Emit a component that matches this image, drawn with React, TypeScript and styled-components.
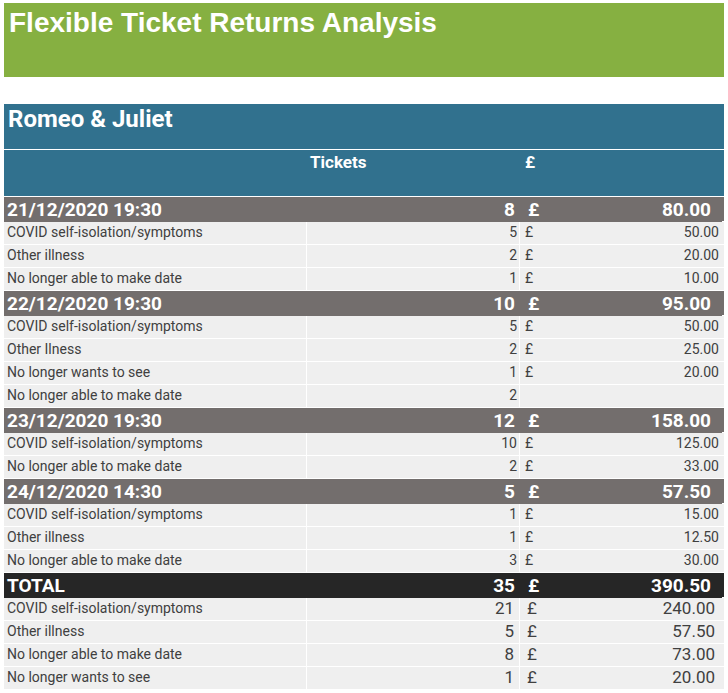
import React from "react";
import styled, { createGlobalStyle } from "styled-components";

const Global = createGlobalStyle`
  html, body { margin: 0; padding: 0; background: #ffffff; }
  body { font-family: Roboto, "Liberation Sans", sans-serif; }
`;

const Page = styled.div`
  padding: 3px 4px 0 4px;
  width: 720px;
`;

const TitleBand = styled.div`
  background: #86b041;
  height: 74px;
  box-sizing: border-box;
  padding: 4px 0 0 5px;
  font-family: "Liberation Sans", Arial, sans-serif;
  font-weight: 700;
  font-size: 28px;
  color: #ffffff;
`;

const Table = styled.div`
  margin-top: 27px;
  display: flex;
  flex-direction: column;
  background: #ffffff;
`;

const ShowBand = styled.div`
  background: #31718e;
  height: 46px;
  box-sizing: border-box;
  padding: 1px 0 0 4px;
  font-weight: 700;
  font-size: 24px;
  color: #ffffff;
  border-bottom: 1px solid #ffffff;
`;

const Grid = styled.div<{ $h: number; $bg: string; $gap?: boolean }>`
  display: grid;
  grid-template-columns: 302px 212px 204px;
  column-gap: ${(p) => (p.$gap ? "1px" : "0")};
  height: ${(p) => p.$h}px;
  background: ${(p) => (p.$gap ? "#ffffff" : p.$bg)};
  margin-bottom: 1px;
  & > div {
    background: ${(p) => p.$bg};
  }
`;

const HeadCell = styled.div<{ $pl?: number }>`
  font-weight: 700;
  font-size: 17px;
  color: #ffffff;
  padding: 2px 0 0 ${(p) => p.$pl ?? 0}px;
  line-height: 20px;
`;

const GroupLabel = styled.div`
  font-weight: 700;
  font-size: 19px;
  line-height: 24px;
  padding-top: 1px;
  color: #ffffff;
  padding-left: 3px;
  white-space: nowrap;
`;

const GroupNum = styled.div`
  font-weight: 700;
  font-size: 19px;
  line-height: 24px;
  padding-top: 1px;
  color: #ffffff;
  text-align: right;
  padding-right: 3px;
`;

const Money = styled.div<{ $size: number; $weight: number; $color: string; $lp: number; $rp: number }>`
  display: flex;
  justify-content: space-between;
  font-size: ${(p) => p.$size}px;
  font-weight: ${(p) => p.$weight};
  color: ${(p) => p.$color};
  line-height: ${(p) => (p.$weight === 700 ? 24 : 18)}px;
  padding: 1px ${(p) => p.$rp}px 0 ${(p) => p.$lp}px;
`;

const Label = styled.div`
  font-size: 14px;
  line-height: 18px;
  color: #404040;
  padding: 1px 0 0 3px;
  white-space: nowrap;
`;

const Num = styled.div<{ $size: number; $rp: number }>`
  font-size: ${(p) => p.$size}px;
  line-height: 18px;
  color: #404040;
  text-align: right;
  padding: 1px ${(p) => p.$rp}px 0 0;
`;

type Row = [string, number, string | null];
type Group = { label: string; tickets: number; total: string; rows: Row[] };

const groups: Group[] = [
  {
    label: "21/12/2020 19:30",
    tickets: 8,
    total: "80.00",
    rows: [
      ["COVID self-isolation/symptoms", 5, "50.00"],
      ["Other illness", 2, "20.00"],
      ["No longer able to make date", 1, "10.00"],
    ],
  },
  {
    label: "22/12/2020 19:30",
    tickets: 10,
    total: "95.00",
    rows: [
      ["COVID self-isolation/symptoms", 5, "50.00"],
      ["Other Ilness", 2, "25.00"],
      ["No longer wants to see", 1, "20.00"],
      ["No longer able to make date", 2, null],
    ],
  },
  {
    label: "23/12/2020 19:30",
    tickets: 12,
    total: "158.00",
    rows: [
      ["COVID self-isolation/symptoms", 10, "125.00"],
      ["No longer able to make date", 2, "33.00"],
    ],
  },
  {
    label: "24/12/2020 14:30",
    tickets: 5,
    total: "57.50",
    rows: [
      ["COVID self-isolation/symptoms", 1, "15.00"],
      ["Other illness", 1, "12.50"],
      ["No longer able to make date", 3, "30.00"],
    ],
  },
];

const totals: Row[] = [
  ["COVID self-isolation/symptoms", 21, "240.00"],
  ["Other illness", 5, "57.50"],
  ["No longer able to make date", 8, "73.00"],
  ["No longer wants to see", 1, "20.00"],
];

function HeaderRow({ label, tickets, total, bg }: { label: string; tickets: number; total: string; bg: string }) {
  return (
    <Grid $h={24} $bg={bg}>
      <GroupLabel>{label}</GroupLabel>
      <GroupNum>{tickets}</GroupNum>
      <Money $size={19} $weight={700} $color="#ffffff" $lp={10} $rp={11}>
        <span>£</span>
        <span>{total}</span>
      </Money>
    </Grid>
  );
}

function DataRow({ row, big }: { row: Row; big?: boolean }) {
  const [label, n, amt] = row;
  return (
    <Grid $h={22} $bg="#efefef" $gap>
      <Label>{label}</Label>
      <Num $size={big ? 17 : 14} $rp={big ? 5 : 2}>{n}</Num>
      <Money $size={big ? 17 : 14} $weight={400} $color="#404040" $lp={big ? 7 : 5} $rp={big ? 9 : 5}>
        <span>{amt ? "£" : ""}</span>
        <span>{amt ?? ""}</span>
      </Money>
    </Grid>
  );
}

export default function App() {
  return (
    <>
      <Global />
      <Page>
        <TitleBand>Flexible Ticket Returns Analysis</TitleBand>
        <Table>
          <ShowBand>Romeo &amp; Juliet</ShowBand>
          <Grid $h={46} $bg="#31718e">
            <HeadCell />
            <HeadCell $pl={4}>Tickets</HeadCell>
            <HeadCell $pl={7}>£</HeadCell>
          </Grid>
          {groups.map((g) => (
            <React.Fragment key={g.label}>
              <HeaderRow label={g.label} tickets={g.tickets} total={g.total} bg="#736e6d" />
              {g.rows.map((r, i) => (
                <DataRow key={i} row={r} />
              ))}
            </React.Fragment>
          ))}
          <HeaderRow label="TOTAL" tickets={35} total="390.50" bg="#262626" />
          {totals.map((r, i) => (
            <DataRow key={i} row={r} big />
          ))}
        </Table>
      </Page>
    </>
  );
}
